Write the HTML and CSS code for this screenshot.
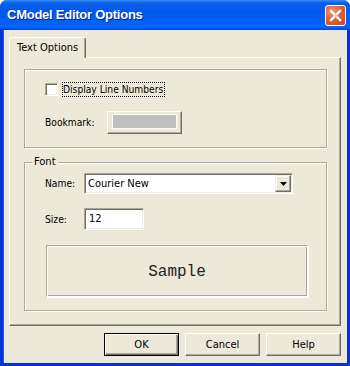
FILE: index.html
```html
<!DOCTYPE html>
<html>
<head>
<meta charset="utf-8">
<link rel="stylesheet" href="styles.css">
</head>
<body>
<div class="window">
  <div class="titlebar">
    <span class="title">CModel Editor Options</span>
    <div class="close">
      <svg width="13" height="13" viewBox="0 0 13 13"><path d="M2 2 L11 11 M11 2 L2 11" stroke="#fff" stroke-width="2.4" stroke-linecap="square"/></svg>
    </div>
  </div>
  <div class="client">
    <div class="tabs"><div class="tab">Text Options</div></div>
    <div class="panel">
      <div class="group g1">
        <div class="check-row">
          <span class="checkbox"></span>
          <span class="focus">Display Line Numbers</span>
        </div>
        <div class="row bm-row">
          <span class="lbl bm-lbl">Bookmark:</span>
          <div class="btn colorbtn"><span class="swatch"></span></div>
        </div>
      </div>
      <div class="group g2">
        <span class="caption">Font</span>
        <div class="row name-row">
          <span class="lbl">Name:</span>
          <div class="combo">
            <span class="value">Courier New</span>
            <span class="drop"><svg width="7" height="4" viewBox="0 0 7 4"><path d="M0 0 H7 L3.5 4 Z" fill="#000"/></svg></span>
          </div>
        </div>
        <div class="row size-row">
          <span class="lbl">Size:</span>
          <div class="edit">12</div>
        </div>
        <div class="sample">Sample</div>
      </div>
    </div>
    <div class="buttons">
      <div class="btn push default">OK</div>
      <div class="btn push">Cancel</div>
      <div class="btn push">Help</div>
    </div>
  </div>
</div>
</body>
</html>
```

FILE: styles.css
```css
* { box-sizing: border-box; }
html, body { margin: 0; padding: 0; background: #ffffff; }
body { font-family: "DejaVu Sans Condensed", "DejaVu Sans", sans-serif; font-size: 10.2px; color: #000; }

.window {
  width: 350px;
  height: 366px;
  background: #0831D9;
  border-radius: 7px 7px 0 0;
  overflow: hidden;
  display: flex;
  flex-direction: column;
}

.titlebar {
  height: 30px;
  flex: none;
  display: flex;
  align-items: center;
  justify-content: space-between;
  padding: 0 4px 0 7px;
  background: linear-gradient(180deg, #3a8cfd 0%, #0a5fe8 10%, #0058ee 40%, #0062f6 80%, #0066ff 90%, #0055ef 95%, #003dd7 100%);
}

.title {
  color: #fff;
  font-family: "Liberation Sans", Arial, sans-serif;
  font-weight: bold;
  font-size: 13px;
  letter-spacing: -0.25px;
  text-shadow: 1px 1px 0 #0a1e8a;
  margin-top: -1px;
}

.close {
  width: 21px;
  height: 21px;
  border: 1px solid #fff;
  border-radius: 3px;
  background: radial-gradient(circle at 35% 30%, #f09a7c 0%, #e2603a 45%, #c8421b 100%);
  display: flex;
  align-items: center;
  justify-content: center;
  margin-top: 1px;
}

.client {
  flex: 1;
  margin: 0 3px 3px 3px;
  background: #ECE9D8;
  padding: 7px 6px 0 6px;
  box-shadow: inset 1px 0 0 #1d5ee8;
}

.tabs { display: flex; height: 20px; position: relative; z-index: 2; }

.tab {
  width: 77px;
  height: 21px;
  padding: 3px 0 0 7px;
  background: #ECE9D8;
  border-left: 1px solid #fff;
  border-top: 1px solid #fff;
  border-right: 1px solid #716F64;
  border-radius: 3px 3px 0 0;
  box-shadow: inset -1px 0 0 #ACA899;
  font-size: 11px;
}

.panel {
  width: 332px;
  height: 269px;
  border: 1px solid;
  border-color: #fff #716F64 #716F64 #fff;
  box-shadow: inset -1px -1px 0 #ACA899;
  padding: 11px 0 0 14px;
}

.group {
  position: relative;
  width: 303px;
  border: 1px solid #ACA899;
  box-shadow: 1px 1px 0 #fff, inset 1px 1px 0 #fff;
  padding-left: 20px;
}

.g1 { height: 79px; padding-top: 12px; }
.g2 { height: 149px; margin-top: 14px; padding-top: 10px; }

.caption {
  position: absolute;
  left: 7px;
  top: -8px;
  padding: 0 2px;
  background: #ECE9D8;
  line-height: 14px;
  font-size: 11px;
}

.check-row { display: flex; align-items: center; height: 14px; }

.checkbox {
  width: 13px;
  height: 13px;
  background: #fff;
  border: 1px solid;
  border-color: #ACA899 #fff #fff #ACA899;
  box-shadow: inset 1px 1px 0 #716F64, inset -1px -1px 0 #F1EFE2;
}

.focus {
  margin-left: 4px;
  border: 1px dotted #000;
  height: 15px;
  line-height: 13px;
  padding: 0 1px 0 0;
}

.row { display: flex; align-items: center; }
.lbl { width: 39px; flex: none; }
.bm-lbl { width: 62px; }
.bm-row { margin-top: 15px; }

.btn {
  border: 1px solid;
  border-color: #fff #716F64 #716F64 #fff;
  box-shadow: inset -1px -1px 0 #ACA899;
  background: #ECE9D8;
}

.colorbtn {
  width: 75px;
  height: 23px;
  padding: 2px 0 0 4px;
}
.swatch {
  display: block;
  width: 65px;
  height: 15px;
  background: #C0C0C0;
  border: 1px solid #fff;
}

.combo {
  width: 209px;
  height: 21px;
  background: #fff;
  border: 1px solid;
  border-color: #ACA899 #fff #fff #ACA899;
  box-shadow: inset 1px 1px 0 #716F64, inset -1px -1px 0 #F1EFE2;
  display: flex;
  align-items: center;
  justify-content: space-between;
  padding: 0 1px 0 3px;
  font-size: 11px;
}
.value { line-height: 17px; }
.drop {
  width: 16px;
  height: 17px;
  background: #ECE9D8;
  border: 1px solid;
  border-color: #F1EFE2 #716F64 #716F64 #F1EFE2;
  box-shadow: inset -1px -1px 0 #ACA899, inset 1px 1px 0 #fff;
  display: flex;
  align-items: center;
  justify-content: center;
}

.size-row { margin-top: 14px; }
.edit {
  width: 60px;
  height: 22px;
  background: #fff;
  border: 1px solid;
  border-color: #ACA899 #fff #fff #ACA899;
  box-shadow: inset 1px 1px 0 #716F64, inset -1px -1px 0 #F1EFE2;
  padding: 3px 0 0 4px;
  font-size: 11px;
}

.sample {
  width: 262px;
  height: 52px;
  margin-top: 15px;
  margin-left: 1px;
  border: 1px solid;
  border-color: #ACA899 #fff #fff #ACA899;
  box-shadow: inset 1px 1px 0 #fff, 1px 1px 0 #fff, inset -1px -1px 0 #ACA899;
  display: flex;
  align-items: center;
  justify-content: center;
  font-family: "Liberation Mono", "Courier New", monospace;
  font-size: 16px;
  padding-top: 2px;
  color: #222;
}

.buttons {
  display: flex;
  justify-content: flex-end;
  gap: 6px;
  margin-top: 7px;
}

.push {
  width: 75px;
  height: 23px;
  display: flex;
  align-items: center;
  justify-content: center;
  font-size: 11px;
}

.default {
  border: 1px solid #000;
  box-shadow: inset 1px 1px 0 #fff, inset -1px -1px 0 #716F64, inset -2px -2px 0 #ACA899;
}
```
